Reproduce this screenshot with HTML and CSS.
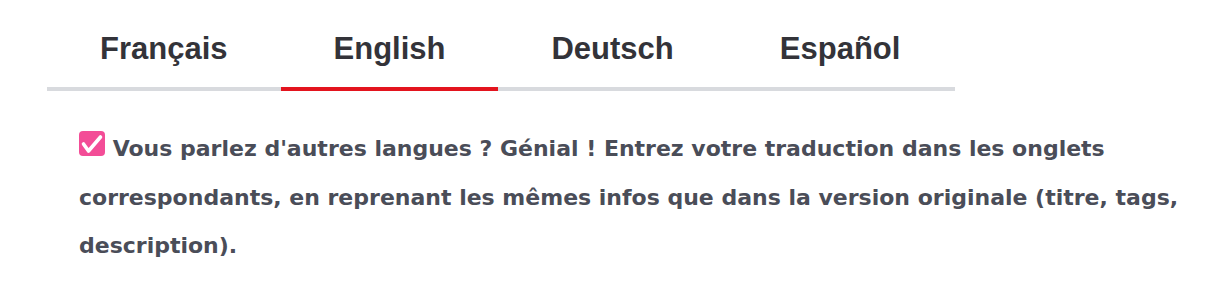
FILE: index.html
```html
<!DOCTYPE html>
<html lang="fr">
<head>
<meta charset="utf-8">
<link rel="stylesheet" href="styles.css">
</head>
<body>
<div class="page">
  <nav class="tabs">
    <div class="tab">Français</div>
    <div class="tab active">English</div>
    <div class="tab">Deutsch</div>
    <div class="tab">Español</div>
  </nav>
  <p class="note"><span class="check"><svg viewBox="0 0 26 25" width="26" height="25"><path d="M4.5 13 L9.5 20 L21.5 6" fill="none" stroke="#fff" stroke-width="3.6" stroke-linecap="round" stroke-linejoin="round"/></svg></span> Vous parlez d'autres langues ? Génial ! Entrez votre traduction dans les onglets correspondants, en reprenant les mêmes infos que dans la version originale (titre, tags, description).</p>
</div>
</body>
</html>
```
FILE: styles.css
```css
html, body { margin: 0; padding: 0; background: #fff; }
.page { padding: 0; }
.tabs {
  display: flex;
  margin: 0 0 0 47px;
  width: 908px;
  padding-top: 23px;
  border-bottom: 4px solid #d8dade;
}
.tab {
  font-family: "Liberation Sans", Arial, sans-serif;
  font-weight: 700;
  font-size: 31px;
  color: #333339;
  padding: 0 53px;
  height: 64px;
  line-height: 52px;
  margin-bottom: -4px;
  border-bottom: 4px solid transparent;
  box-sizing: content-box;
}
.tab.active { border-bottom-color: #e3141e; }
.note {
  margin: 34px 0 0 79px;
  width: 1125px;
  font-family: "DejaVu Sans", sans-serif;
  font-weight: 700;
  font-size: 22px;
  line-height: 48.7px;
  color: #4a4d58;
}
.check {
  display: inline-block;
  width: 26px;
  height: 25px;
  background: #f34d97;
  border-radius: 4px;
  vertical-align: baseline;
}
.check svg { display: block; width: 26px; height: 25px; }
```
